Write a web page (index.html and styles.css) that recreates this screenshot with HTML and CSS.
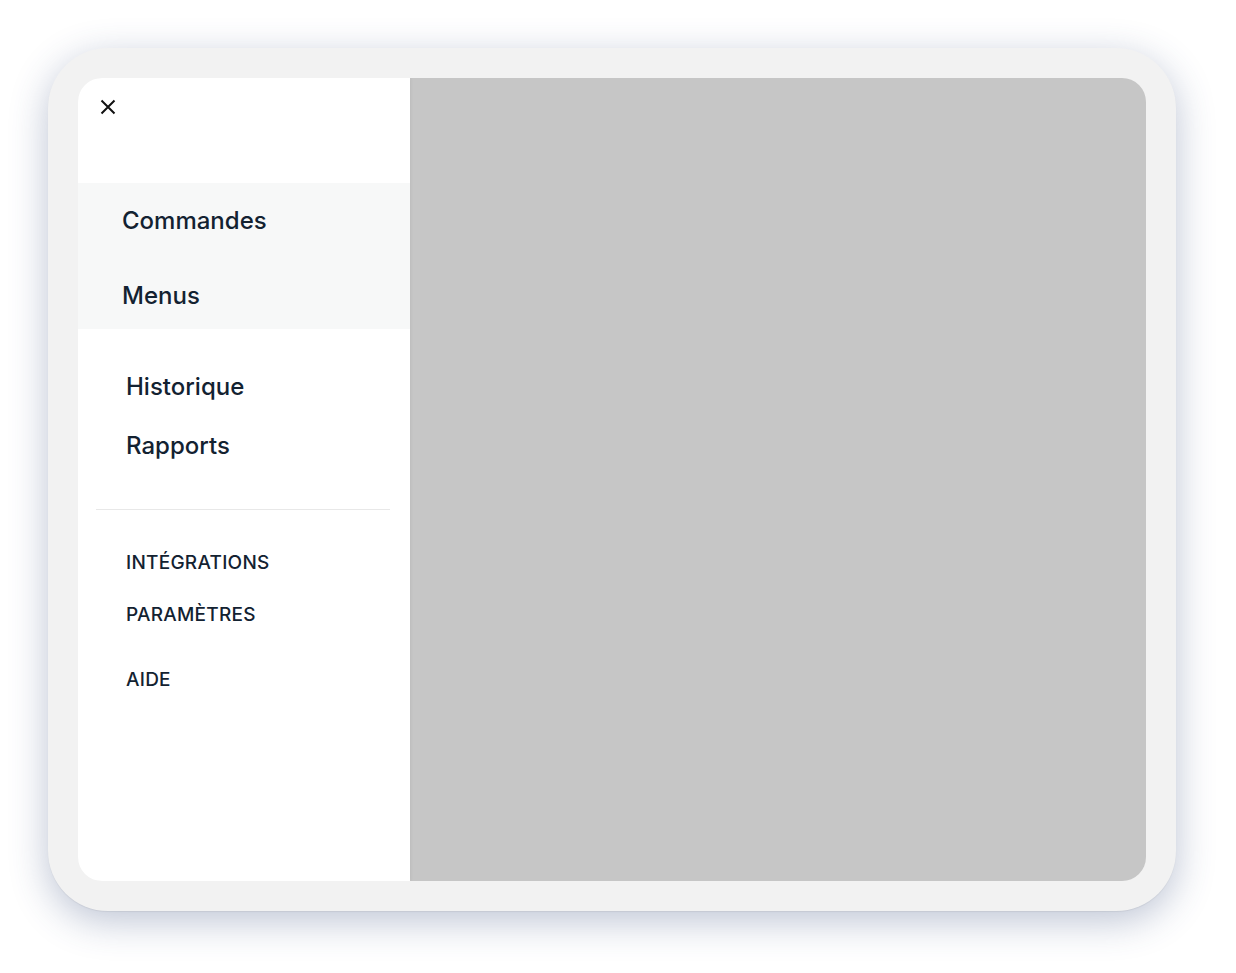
FILE: index.html
```html
<!DOCTYPE html>
<html lang="fr">
<head>
  <meta charset="UTF-8">
  <title>Menu</title>
  <link rel="stylesheet" href="styles.css">
</head>
<body>

  <div class="device">
    <div class="screen">
      <nav class="sidebar">
        <button class="close" aria-label="Fermer">
          <svg width="16" height="16" viewBox="0 0 16 16">
            <path d="M1.5 1.5 L14.5 14.5 M14.5 1.5 L1.5 14.5" stroke="#111" stroke-width="2" fill="none"/>
          </svg>
        </button>

        <div class="main-links">
          <a class="link">Commandes</a>
          <a class="link">Menus</a>
        </div>

        <div class="sub-links">
          <a class="link">Historique</a>
          <a class="link">Rapports</a>
        </div>

        <hr class="divider">

        <div class="caps-links">
          <a class="caps">INTÉGRATIONS</a>
          <a class="caps">PARAMÈTRES</a>
          <a class="caps help">AIDE</a>
        </div>
      </nav>
      <div class="content"></div>
    </div>
  </div>

</body>
</html>
```

FILE: styles.css
```css
body {
  margin: 0;
  padding: 48px 0 62px 48px;
  background: #fff;
  font-family: Inter, "Liberation Sans", sans-serif;
  color: #132231;
}
.device {
  width: 1068px;
  height: 803px;
  padding: 30px;
  background: #f2f2f2;
  border-radius: 60px;
  box-shadow: 0 1px 1px rgba(0, 0, 0, 0.06), 0 10px 38px rgba(50, 70, 120, 0.32);
}
.screen {
  display: flex;
  height: 100%;
  border-radius: 24px;
  overflow: hidden;
}
.sidebar {
  width: 332px;
  flex-shrink: 0;
  background: #fff;
  display: flex;
  flex-direction: column;
  box-shadow: 1px 0 3px rgba(0, 0, 0, 0.05);
  position: relative;
}
.close {
  align-self: flex-start;
  margin: 21px 0 0 22px;
  padding: 0;
  border: 0;
  background: none;
  width: 16px;
  height: 16px;
  cursor: pointer;
}
.close svg {
  display: block;
}
.main-links {
  margin-top: 68px;
  background: #f7f8f8;
  padding: 23px 0 18px 44px;
  display: flex;
  flex-direction: column;
  gap: 45px;
}
.link {
  font-size: 24px;
  font-weight: 500;
  line-height: 30px;
}
.sub-links {
  margin-top: 43px;
  padding-left: 48px;
  display: flex;
  flex-direction: column;
  gap: 29px;
}
.divider {
  margin: 48px 20px 0 18px;
  border: 0;
  border-top: 1px solid #e8e8e8;
}
.caps-links {
  margin-top: 41px;
  padding-left: 48px;
  display: flex;
  flex-direction: column;
  gap: 28px;
}
.caps {
  font-size: 19px;
  font-weight: 500;
  line-height: 24px;
  letter-spacing: 0.25px;
}
.caps.help {
  margin-top: 13px;
}
.content {
  flex: 1;
  background: #c6c6c6;
}
```
